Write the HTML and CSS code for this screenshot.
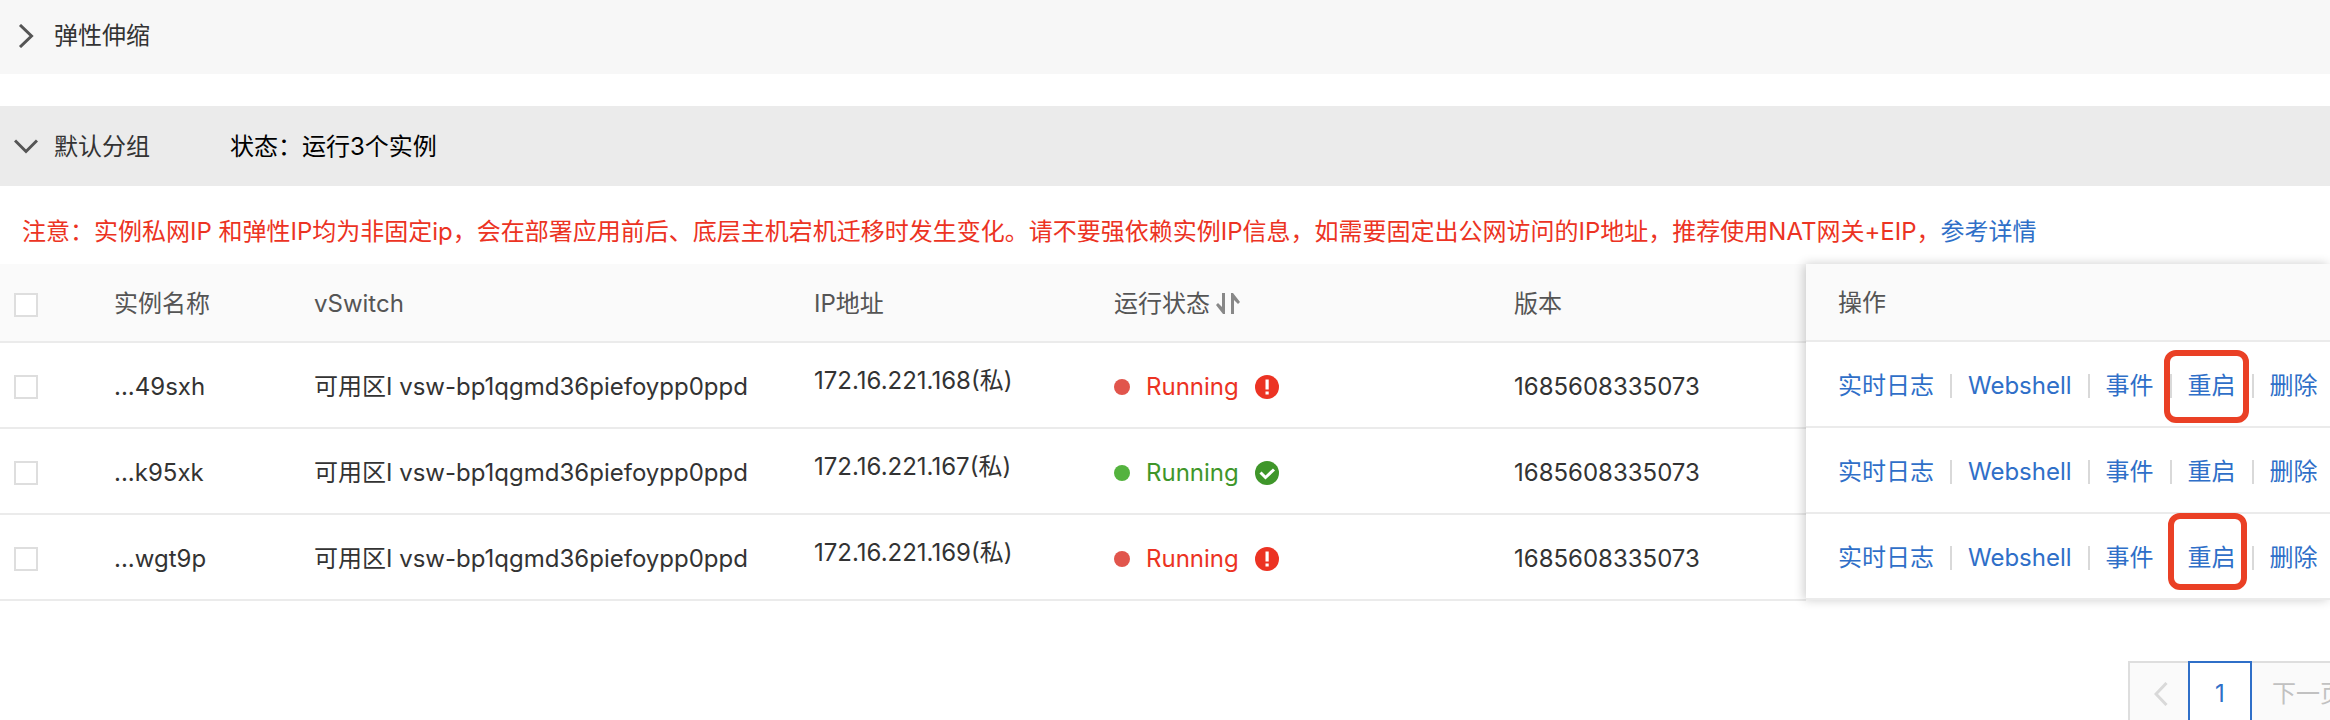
FILE: index.html
```
<!DOCTYPE html>
<html lang="zh-CN">
<head>
    <meta charset="UTF-8">
    <title>实例列表</title>
    <link rel="stylesheet" href="styles.css">
</head>
<body>
    <svg class="sprite" aria-hidden="true">
        <symbol id="icon-error" viewBox="0 0 24 24">
            <circle cx="12" cy="12" r="12" fill="#ec3323"/>
            <path d="M10.5 4.500h3.2v10h-3.2zM10.5 16.500h3.2v3h-3.2z" fill="#fff"/>
        </symbol>
        <symbol id="icon-success" viewBox="0 0 24 24">
            <circle cx="12" cy="12" r="12" fill="#3f962a"/>
            <path d="M5.500 11.500l5 5L19 8.500" fill="none" stroke="#fff" stroke-width="3"/>
        </symbol>
    </svg>

    <button type="button" class="group group-closed" aria-expanded="false">
        <svg class="arrow" viewBox="0 0 24 24"><path d="M6 1l11.500 11L6 23"/></svg>
        <span class="group-name">弹性伸缩</span>
    </button>

    <button type="button" class="group group-open" aria-expanded="true">
        <svg class="arrow" viewBox="0 0 24 24"><path d="M1 5.500L12 16.500 23 5.500"/></svg>
        <span class="group-name">默认分组</span>
        <span class="group-status">状态：运行3个实例</span>
    </button>

    <p class="notice">注意：实例私网IP 和弹性IP均为非固定ip，会在部署应用前后、底层主机宕机迁移时发生变化。请不要强依赖实例IP信息，如需要固定出公网访问的IP地址，推荐使用NAT网关+EIP，<a href="#">参考详情</a></p>

    <div class="table-wrap">
        <table class="main-table">
            <colgroup>
                <col class="col-check">
                <col class="col-name">
                <col class="col-vswitch">
                <col class="col-ip">
                <col class="col-state">
                <col>
            </colgroup>
            <thead>
                <tr>
                    <th class="check"><input type="checkbox" aria-label="全选"></th>
                    <th>实例名称</th>
                    <th>vSwitch</th>
                    <th>IP地址</th>
                    <th>
                        <button type="button" class="sort">运行状态<svg viewBox="0 0 24 22"><path d="M6 0h3v21H7L0 12l2-2 4 4z"/><path d="M15 0h2l7 9-2 2-4-4v14h-3z"/></svg></button>
                    </th>
                    <th>版本</th>
                </tr>
            </thead>
            <tbody>
                <tr>
                    <td class="check"><input type="checkbox" aria-label="选择 49sxh"></td>
                    <td>...49sxh</td>
                    <td>可用区I vsw-bp1qgmd36piefoypp0ppd</td>
                    <td class="ip">172.16.221.168(私)</td>
                    <td><div class="state state-error"><i class="dot"></i>Running<svg><use href="#icon-error"/></svg></div></td>
                    <td>1685608335073</td>
                </tr>
                <tr>
                    <td class="check"><input type="checkbox" aria-label="选择 k95xk"></td>
                    <td>...k95xk</td>
                    <td>可用区I vsw-bp1qgmd36piefoypp0ppd</td>
                    <td class="ip">172.16.221.167(私)</td>
                    <td><div class="state state-success"><i class="dot"></i>Running<svg><use href="#icon-success"/></svg></div></td>
                    <td>1685608335073</td>
                </tr>
                <tr>
                    <td class="check"><input type="checkbox" aria-label="选择 wgt9p"></td>
                    <td>...wgt9p</td>
                    <td>可用区I vsw-bp1qgmd36piefoypp0ppd</td>
                    <td class="ip">172.16.221.169(私)</td>
                    <td><div class="state state-error"><i class="dot"></i>Running<svg><use href="#icon-error"/></svg></div></td>
                    <td>1685608335073</td>
                </tr>
            </tbody>
        </table>

        <!-- 右侧锁定列 -->
        <table class="lock-table">
            <thead>
                <tr><th>操作</th></tr>
            </thead>
            <tbody>
                <tr>
                    <td><div class="actions"><a href="#">实时日志</a><a href="#">Webshell</a><a href="#">事件</a><a href="#">重启<span class="mark mark-first"></span></a><a href="#">删除</a></div></td>
                </tr>
                <tr>
                    <td><div class="actions"><a href="#">实时日志</a><a href="#">Webshell</a><a href="#">事件</a><a href="#">重启</a><a href="#">删除</a></div></td>
                </tr>
                <tr>
                    <td><div class="actions"><a href="#">实时日志</a><a href="#">Webshell</a><a href="#">事件</a><a href="#">重启<span class="mark mark-last"></span></a><a href="#">删除</a></div></td>
                </tr>
            </tbody>
        </table>
    </div>

    <nav class="pagination">
        <button type="button" class="page prev" disabled aria-label="上一页"><svg viewBox="0 0 14 24"><path d="M12.500 1L2 12l10.500 11"/></svg></button>
        <button type="button" class="page current">1</button>
        <button type="button" class="page next" disabled>下一页</button>
    </nav>
</body>
</html>
```

FILE: styles.css
```
* {
    box-sizing: border-box;
}
body {
    margin: 0;
    font-family: Inter, "Noto Sans CJK SC", sans-serif;
    font-size: 24px;
    line-height: 36px;
    color: #333;
    background-color: #fff;
    overflow: hidden;
}
button {
    font: inherit;
    color: inherit;
    border: none;
    padding: 0;
    background: none;
    cursor: pointer;
}
a {
    color: #2f6fc8;
    text-decoration: none;
}
.sprite {
    display: none;
}

/* 分组标题 */
.group {
    display: flex;
    align-items: center;
    width: 100%;
    padding: 0 14px;
    text-align: left;
}
.group-closed {
    height: 74px;
    padding-bottom: 3px;
    margin-bottom: 32px;
    background-color: #f7f7f7;
}
.group-open {
    height: 80px;
    padding-top: 2px;
    background-color: #ebebeb;
}
.arrow {
    width: 24px;
    height: 24px;
    margin-right: 16px;
    fill: none;
    stroke: #555;
    stroke-width: 3;
}
.group-status {
    margin-left: 80px;
    color: #000;
}

.notice {
    margin: 0;
    padding: 28px 22px 14px;
    color: #ec3323;
    white-space: nowrap;
}

/* 实例表格 */
.table-wrap {
    display: flex;
    align-items: flex-start;
}
table {
    border-collapse: separate;
    border-spacing: 0;
    table-layout: fixed;
}
th, td {
    border-bottom: 2px solid #ebebeb;
    text-align: left;
    white-space: nowrap;
}
th {
    height: 79px;
    padding: 2px 0 0 32px;
    font-weight: normal;
    color: #555;
    background-color: #fafafa;
}
td {
    height: 86px;
    padding: 3px 0 0 32px;
    background-color: #fff;
}
.main-table {
    flex: 1;
    min-width: 0;
}
.col-check {
    width: 82px;
}
.col-name {
    width: 200px;
}
.col-vswitch {
    width: 500px;
}
.col-ip {
    width: 300px;
}
.col-state {
    width: 400px;
}
.check {
    padding: 4px 0 0 14px;
}
input[type="checkbox"] {
    appearance: none;
    display: block;
    width: 24px;
    height: 24px;
    margin: 0;
    border: 2px solid #dedede;
    background-color: #fff;
}
.ip {
    padding-bottom: 12px;
}
.sort {
    display: flex;
    align-items: center;
    gap: 6px;
}
.sort svg {
    width: 24px;
    height: 22px;
    fill: #888;
}
.state {
    display: flex;
    align-items: center;
}
.state svg {
    width: 24px;
    height: 24px;
    margin-left: 16px;
}
.dot {
    width: 16px;
    height: 16px;
    margin-right: 16px;
    border-radius: 50%;
}
.state-error {
    color: #ec3323;
}
.state-error .dot {
    background-color: #e1554c;
}
.state-success {
    color: #3f962a;
}
.state-success .dot {
    background-color: #54b33e;
}

.lock-table {
    position: relative;
    flex: none;
    width: 524px;
    box-shadow: -2px 0 10px rgba(0, 0, 0, 0.2);
}
.lock-table th {
    height: 78px;
}
.actions {
    display: flex;
    align-items: center;
}
.actions a {
    position: relative;
    line-height: 24px;
}
.actions a + a {
    margin-left: 16px;
    padding-left: 16px;
    border-left: 2px solid #d9d9d9;
}
/* 红框标注 */
.mark {
    position: absolute;
    border: 6px solid #ea4025;
    border-radius: 12px;
}
.mark-first {
    top: -24px;
    left: -8px;
    width: 85px;
    height: 73px;
}
.mark-last {
    top: -33px;
    left: -4px;
    width: 79px;
    height: 77px;
}

/* 分页 */
.pagination {
    display: flex;
    width: 202px;
    margin: 60px 0 0 auto;
}
.page {
    flex: none;
    height: 66px;
    border: 2px solid #dedede;
    background-color: #fafafa;
    color: #c1c1c1;
}
.prev {
    width: 60px;
    border-right: none;
    padding-left: 4px;
}
.prev svg {
    display: block;
    width: 14px;
    height: 24px;
    margin: 0 auto;
    fill: none;
    stroke: #d9d9d9;
    stroke-width: 3;
}
.current {
    width: 64px;
    border-color: #2f6fc8;
    background-color: #fff;
    color: #2f6fc8;
}
.next {
    padding: 0 20px;
    border-left: none;
}
```
